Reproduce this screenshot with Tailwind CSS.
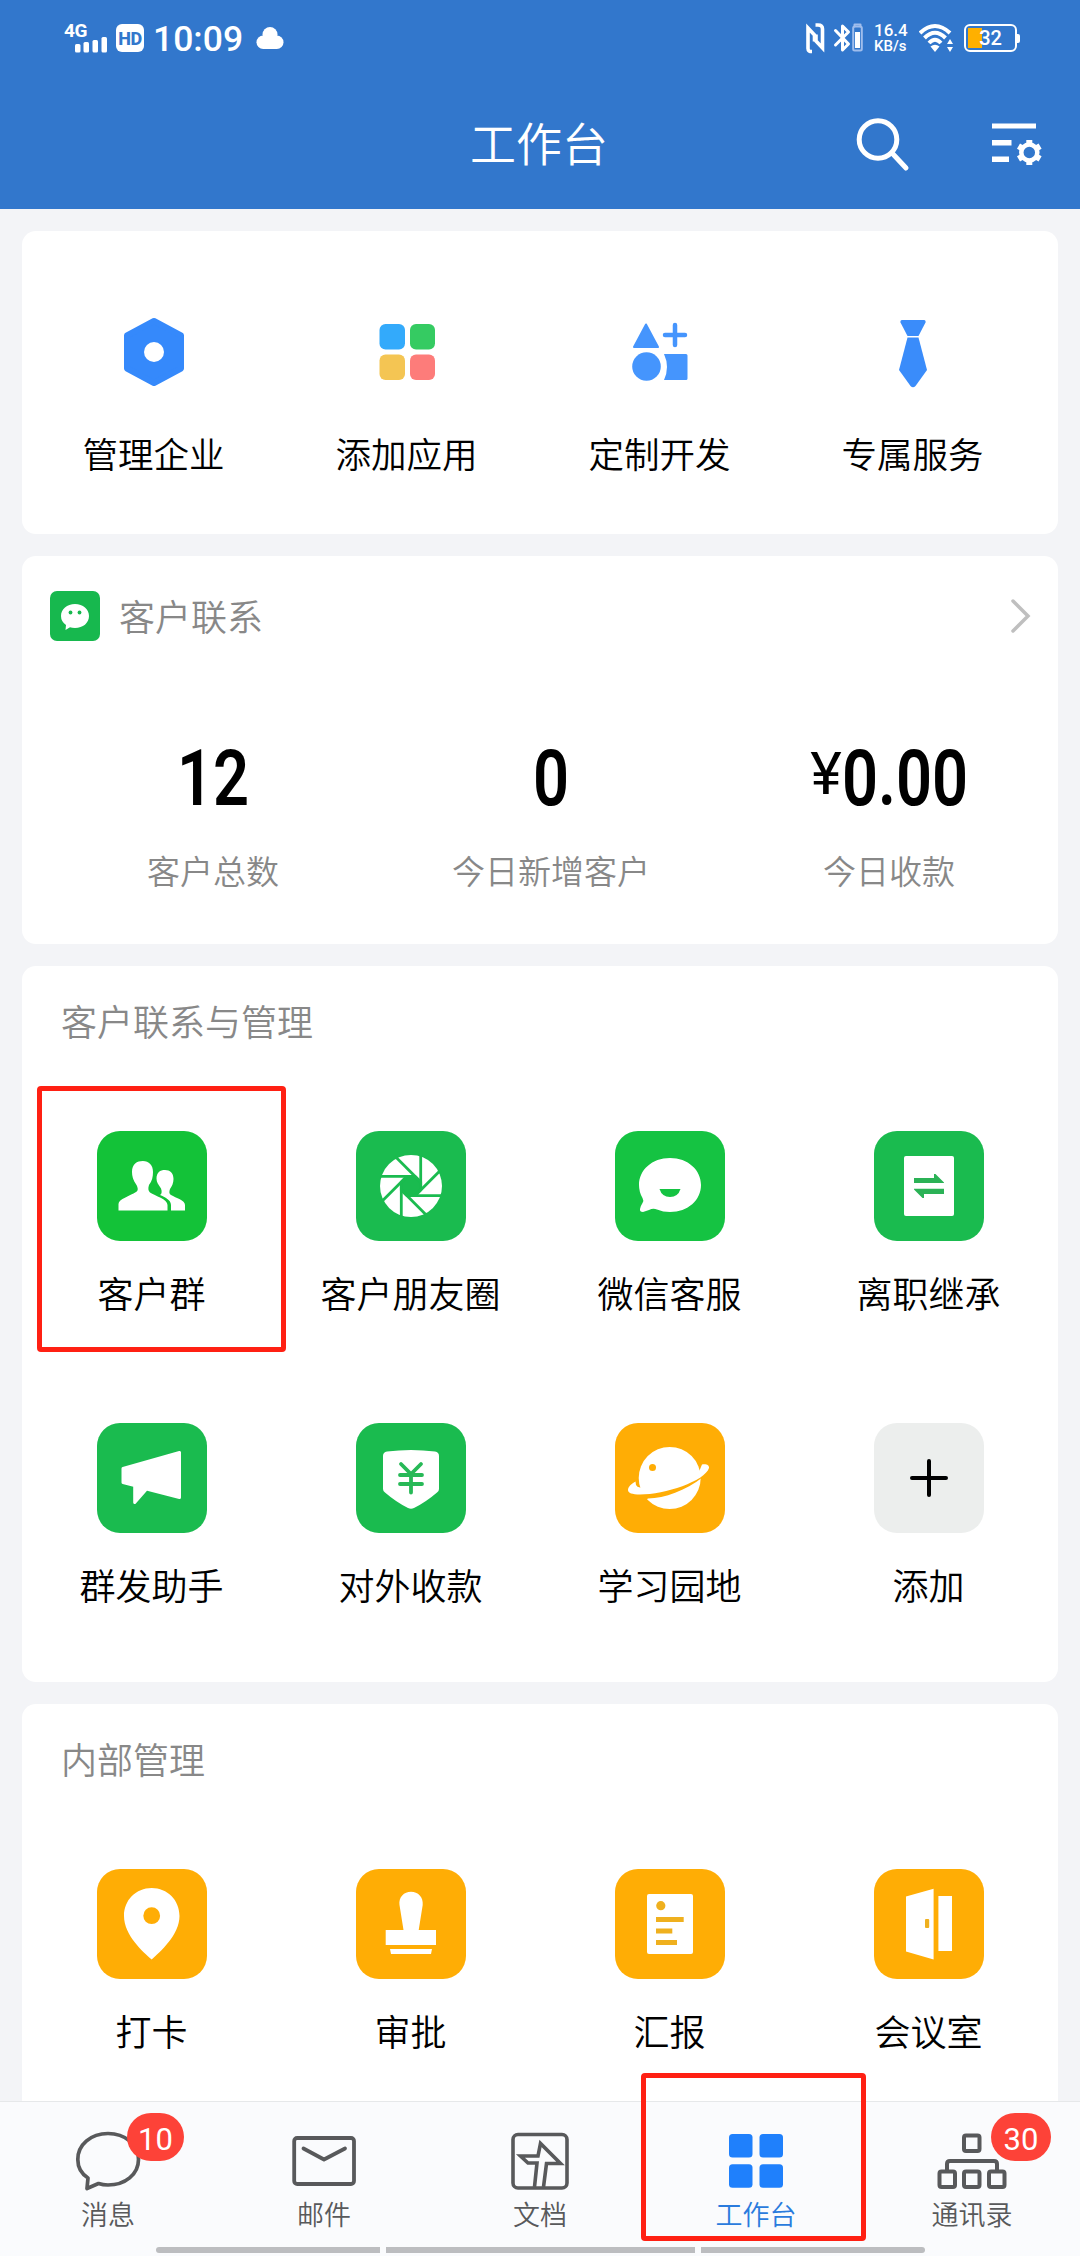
<!DOCTYPE html>
<html lang="zh-CN">
<head>
<meta charset="utf-8">
<title>工作台</title>
<script src="https://cdn.jsdelivr.net/npm/@tailwindcss/browser@4"></script>
</head>
<body class="w-[1080px] h-[2256px] overflow-hidden bg-[#f3f4f7] font-['Noto_Sans_CJK_SC',sans-serif] font-[350] text-black">
<div class="flex flex-col w-[1080px] h-[2256px]">

  <header class="h-[209px] shrink-0 bg-[#3277cc] text-white flex flex-col">
    <!-- status bar -->
    <div class="h-[76px] flex items-center justify-between pl-[62px] pr-[60px]">
      <div class="flex items-center h-[32px]">
        <div class="relative w-[46px] h-[32px]">
          <span class="absolute left-[2px] top-[0px] font-['Roboto',sans-serif] font-bold text-[19px] leading-[17px] tracking-[-0.5px]">4G</span>
          <svg class="absolute left-0 top-0" width="46" height="32" viewBox="0 0 46 32" fill="#fff"><rect x="13" y="22" width="5.5" height="8.5" rx="1.5"/><rect x="21.5" y="20" width="5.5" height="10.5" rx="1.5"/><rect x="30.5" y="18" width="5.5" height="12.5" rx="1.5"/><rect x="39.5" y="15" width="5.5" height="15.500" rx="1.500"/></svg>
        </div>
        <div class="ml-[8px] w-[28px] h-[28px] rounded-[6px] bg-white text-[#3277cc] font-['Roboto',sans-serif] font-extrabold text-[18px] tracking-[-0.5px] leading-[29px] text-center">HD</div>
        <span class="ml-[9px] w-[92px] font-['Roboto',sans-serif] font-medium text-[35.500px] leading-[32px] pt-[2px] whitespace-nowrap">10:09</span>
        <svg class="ml-[11px]" width="28" height="24" viewBox="0 0 28 24" fill="#fff"><circle cx="14" cy="8.500" r="7.500"/><rect x="0.500" y="9.500" width="27" height="13.500" rx="6.700"/></svg>
      </div>
      <div class="flex items-center h-[32px]">
        <svg width="62" height="32" viewBox="0 0 62 32" fill="none" stroke="#fff" stroke-linejoin="round" stroke-linecap="round">
          <path d="M10 29.500C7.500 29.500 6 29 6 26.500V6L12.500 13V19.500M13.500 3H16C19 3 20.500 4 20.500 7V26L14 19V12.500" stroke-width="3.600" stroke-linejoin="miter" stroke-linecap="butt"/>
          <path d="M33.500 8.500L46.500 22L40.500 28V4L46.500 10L33.500 23" stroke-width="3"/>
          <path d="M52.500 4.500V2.500H58.500V4.500" stroke="#9fbdec" stroke-width="2"/><rect x="51.200" y="4.500" width="8.600" height="24" rx="1.500" stroke="#9fbdec" stroke-width="2"/><rect x="53" y="10" width="5" height="16" fill="#fff" stroke="none"/>
        </svg>
        <div class="ml-[10px] w-[36px] font-['Roboto',sans-serif] font-medium leading-[16px]"><div class="text-[17px]">16.4</div><div class="text-[15px] whitespace-nowrap">KB/s</div></div>
        <svg class="ml-[9px]" width="36" height="30" viewBox="0 0 36 30" fill="none" stroke="#fff" stroke-width="4"><path d="M1 10Q16 -4 31 10M5.500 15Q16 4.500 26.500 15M10 20Q16 13.500 22 20"/><path d="M11.500 23.500Q16 20 20.500 23.500L16 29Z" fill="#fff" stroke="none"/><path d="M31 16L34 21H28ZM31 29L34 24H28Z" fill="#fff" stroke="none"/></svg>
        <div class="relative ml-[9px] w-[53px] h-[28px] rounded-[6px] border-[2.500px] border-white p-[2px] flex">
          <span class="w-[14px] h-full bg-[#ffb000]"></span>
          <span class="absolute inset-0 text-center font-['Roboto',sans-serif] font-medium text-[20px] leading-[25px]">32</span>
        </div>
        <span class="w-[3px] h-[9px] bg-white rounded-r-[2px]"></span>
      </div>
    </div>
    <!-- title bar -->
    <div class="grid grid-cols-3 items-center h-[133px]">
      <span></span>
      <h1 class="text-center text-[46px] leading-[60px] pb-[4px] pr-[2px]">工作台</h1>
      <div class="flex justify-end pr-[38px] pt-[3px] items-center">
        <svg width="56" height="56" viewBox="0 0 56 56" fill="none" stroke="#fff" stroke-width="5" stroke-linecap="round"><circle cx="23" cy="23.500" r="18.800"/><path d="M37 37L51 52"/></svg>
        <svg class="ml-[80px]" width="51" height="44" viewBox="0 0 51 44" fill="#fff"><path d="M1 1.500H45V6.500H1ZM1 18H20.500V23.500H1ZM1 34.500H18V40H1Z"/><circle cx="38.300" cy="30.500" r="8" fill="none" stroke="#fff" stroke-width="4.500"/><g stroke="#fff" stroke-width="6"><path d="M38.300 18V23M38.300 38V43M27.500 24.200L31.800 26.700M44.800 34.300L49.100 36.800M49.100 24.200L44.800 26.700M31.800 34.300L27.500 36.800"/></g></svg>
      </div>
    </div>
  </header>

  <main class="flex-1 min-h-0 overflow-hidden px-[22px] pt-[22px] flex flex-col gap-[22px]">
    <!-- shortcuts -->
    <section class="h-[303px] shrink-0 bg-white rounded-[14px] pl-[5px] pr-[19px] pt-[85px] grid grid-cols-4 text-[35.500px] leading-[44px]">
      <div class="flex flex-col items-center gap-[43px]">
        <svg width="72" height="72" viewBox="0 0 72 72"><path d="M36 5L63 19.500V52.500L36 67L9 52.500V19.500Z" fill="#3589fb" stroke="#3589fb" stroke-width="6" stroke-linejoin="round"/><circle cx="36" cy="36" r="10" fill="#fff"/></svg>
        <span>管理企业</span>
      </div>
      <div class="flex flex-col items-center gap-[43px]">
        <svg width="72" height="72" viewBox="0 0 72 72"><rect x="8.500" y="8" width="25.500" height="25.500" rx="6" fill="#33aafb"/><rect x="39" y="8" width="25" height="25.500" rx="6" fill="#35cb62"/><rect x="8.500" y="38.500" width="25.500" height="25.500" rx="6" fill="#f4c553"/><rect x="39" y="38.500" width="25" height="25.500" rx="6" fill="#fd7c7a"/></svg>
        <span>添加应用</span>
      </div>
      <div class="flex flex-col items-center gap-[43px]">
        <svg width="72" height="72" viewBox="0 0 72 72" fill="#4595fd"><path d="M22 8.500L34 31H10Z" stroke="#4595fd" stroke-width="2" stroke-linejoin="round"/><circle cx="22.500" cy="50.500" r="14.300"/><path d="M51 9V29M41 19H61" stroke="#4595fd" stroke-width="4.500" stroke-linecap="round"/><path d="M41 38H62Q63.500 38 63.500 39.500V62.500Q63.500 64 62 64H40Q46 51 40 38Z"/></svg>
        <span>定制开发</span>
      </div>
      <div class="flex flex-col items-center gap-[43px]">
        <svg width="72" height="72" viewBox="0 0 72 72" fill="#3a8cfa"><path d="M25 4H47Q49 4 48.500 6.500L41.500 20H30.500L23.500 6.500Q23 4 25 4Z"/><path d="M30.500 21.500H41.500L50 54L38.500 70Q36 72.500 33.500 70L22 54Z"/></svg>
        <span>专属服务</span>
      </div>
    </section>

    <!-- customer figures -->
    <section class="h-[388px] shrink-0 bg-white rounded-[14px]">
      <div class="flex items-center pt-[35px] pl-[28px] pr-[26px] h-[85px]">
        <svg width="50" height="50" viewBox="0 0 50 50"><rect width="50" height="50" rx="7" fill="#17b84e"/><path d="M25 13C33 13 39 18 39 25C39 32 33 37 25 37Q22 37 20 36.300L15.500 39L16 34Q11 30.500 11 25C11 18 17 13 25 13Z" fill="#fff"/><circle cx="20.500" cy="21.500" r="1.900" fill="#17b84e"/><circle cx="29.500" cy="21.500" r="1.900" fill="#17b84e"/></svg>
        <h2 class="ml-[19px] text-[36px] leading-[50px] text-[#888] pb-[2px]">客户联系</h2>
        <svg class="ml-auto" width="22" height="36" viewBox="0 0 22 36" fill="none" stroke="#bfbfbf" stroke-width="3.500" stroke-linecap="round"><path d="M3 3L18 18L3 33"/></svg>
      </div>
      <div class="grid grid-cols-3 pl-[22px] mt-[98px] text-center">
        <div><div class="font-['Roboto',sans-serif] font-semibold text-[77px] leading-[80px] scale-x-[.82]">12</div><div class="mt-[13px] text-[33px] leading-[76px] text-[#888]">客户总数</div></div>
        <div><div class="font-['Roboto',sans-serif] font-semibold text-[77px] leading-[80px] scale-x-[.82]">0</div><div class="mt-[13px] text-[33px] leading-[76px] text-[#888]">今日新增客户</div></div>
        <div><div class="flex justify-center font-['Roboto',sans-serif] font-semibold text-[77px] leading-[80px]"><span class="font-normal text-[60px] leading-[70px]">¥</span><span class="origin-left scale-x-[.82] mr-[-28px]">0.00</span></div><div class="mt-[13px] text-[33px] leading-[76px] text-[#888]">今日收款</div></div>
      </div>
    </section>

    <!-- customer tools -->
    <section class="relative h-[716px] shrink-0 bg-white rounded-[14px] pt-[29px]">
      <h2 class="pl-[39px] text-[36px] leading-[50px] text-[#888]">客户联系与管理</h2>
      <div class="mt-[86px] grid grid-cols-4 gap-y-[106px] text-[36px] leading-[50px] text-center">
        <div class="flex flex-col items-center gap-[26px]">
          <svg width="110" height="110" viewBox="0 0 110 110"><rect width="110" height="110" rx="23" fill="#13c238"/><path fill="#fff" d="M21.500 79.500V73C21.500 68 33 65 39 61C41.500 59.500 41 57 39.500 54C36 49 35 45 35 41C35 33 40 30 45.800 30C52 30 56 34 56 41C56 46 55 50 52 54C51 57 51 60 53 61.500C58 65 70.500 68 70.500 74V79.500Z"/><path fill="#fff" d="M74 79.500V74C74 69 68 66 63 64C65 63 65 60 64 57.500C61 53 59.500 51 59.500 47.500C59.500 41.500 63 39 68 39C73 39 76.500 42 76.500 48C76.500 52 75 55 73 58C72 61 72 63 74 64C79 67 88 69 88 74V79.500Z"/></svg>
          <span>客户群</span>
        </div>
        <div class="flex flex-col items-center gap-[26px]">
          <svg width="110" height="110" viewBox="0 0 110 110"><rect width="110" height="110" rx="23" fill="#1abb4f"/><circle cx="55" cy="55" r="31" fill="#fff"/><g transform="translate(55 55)" stroke="#1abb4f" stroke-width="2.800"><path fill="#1abb4f" d="M9.700 -4V4L4 9.700H-4L-9.700 4V-4L-4 -9.700H4Z"/><path d="M9.700 -32V4"/><path d="M9.700 -32V4" transform="rotate(45)"/><path d="M9.700 -32V4" transform="rotate(90)"/><path d="M9.700 -32V4" transform="rotate(135)"/><path d="M9.700 -32V4" transform="rotate(180)"/><path d="M9.700 -32V4" transform="rotate(225)"/><path d="M9.700 -32V4" transform="rotate(270)"/><path d="M9.700 -32V4" transform="rotate(315)"/></g></svg>
          <span>客户朋友圈</span>
        </div>
        <div class="flex flex-col items-center gap-[26px]">
          <svg width="110" height="110" viewBox="0 0 110 110"><rect width="110" height="110" rx="23" fill="#15c342"/><path fill="#fff" d="M55 27C73 27 86 39 86 54C86 69 73 81 55 81Q48 81 42 78.500Q38 77 34 79L28 81Q24.500 81 25 78Q25.500 75 27.500 72Q29 69.500 27.500 67Q24 61 24 54C24 39 37 27 55 27Z"/><path fill="#15c342" d="M44.500 58H65.500Q63 66 55 66T44.500 58Z"/></svg>
          <span>微信客服</span>
        </div>
        <div class="flex flex-col items-center gap-[26px]">
          <svg width="110" height="110" viewBox="0 0 110 110"><rect width="110" height="110" rx="23" fill="#1abb4f"/><rect x="30" y="25" width="50" height="60" rx="2" fill="#fff"/><path fill="#2bb256" d="M40 47H60V43H61.500L70 51.500V52H40ZM70 63H50V67H48.500L40 58.500V57.700H70Z"/></svg>
          <span>离职继承</span>
        </div>
        <div class="flex flex-col items-center gap-[26px]">
          <svg width="110" height="110" viewBox="0 0 110 110"><rect width="110" height="110" rx="23" fill="#1abb4f"/><path fill="#fff" stroke="#fff" stroke-width="3" stroke-linejoin="round" d="M26 45.500L82.500 29.500V74.500L49.500 66L37.700 79.500V62.500L26 59.500Z"/></svg>
          <span>群发助手</span>
        </div>
        <div class="flex flex-col items-center gap-[26px]">
          <svg width="110" height="110" viewBox="0 0 110 110"><rect width="110" height="110" rx="23" fill="#1abb4f"/><path fill="#fff" d="M31 28.500Q55 25.500 79 28.500Q83 29 83 33V66Q83 68 81 69.500Q70 79 58 85Q55 86.500 52 85Q40 79 29 69.500Q27 68 27 66V33Q27 29 31 28.500Z"/><path d="M45 41L55 51L65 41M44 52H66M44 61H66M55 51V69.500" fill="none" stroke="#27b957" stroke-width="3.800" stroke-linecap="round"/></svg>
          <span>对外收款</span>
        </div>
        <div class="flex flex-col items-center gap-[26px]">
          <svg width="110" height="110" viewBox="0 0 110 110"><rect width="110" height="110" rx="23" fill="#ffad05"/><circle cx="54.700" cy="55" r="31" fill="#fff"/><path fill="#ffad05" d="M20 70C45 71 66 64 88 51V54C70 68 50 75 33 75.500L26 80Z"/><path fill="#fff" d="M20.500 58.500C16 61 13 64 13 67C13 70 17 71.500 25 71.500C50 71.500 90 58 94 45C94.500 42 91 40.500 87 41.500L84.500 47.500L72 56L40 65L25 64.500Q22 64 21 62Z"/><circle cx="37.500" cy="44.500" r="3.500" fill="#ffad05"/></svg>
          <span>学习园地</span>
        </div>
        <div class="flex flex-col items-center gap-[26px]">
          <svg width="110" height="110" viewBox="0 0 110 110"><rect width="110" height="110" rx="23" fill="#eceeed"/><path d="M55 38V72M38 55H72" stroke="#000" stroke-width="4" stroke-linecap="round"/></svg>
          <span>添加</span>
        </div>
      </div>
      <div class="absolute left-[15px] top-[120px] w-[249px] h-[266px] border-[5px] border-[#ff2013] rounded-[4px]"></div>
    </section>

    <!-- internal management -->
    <section class="h-[500px] shrink-0 bg-white rounded-[14px] pt-[29px]">
      <h2 class="pl-[39px] text-[36px] leading-[50px] text-[#888]">内部管理</h2>
      <div class="mt-[86px] grid grid-cols-4 text-[36px] leading-[50px] text-center">
        <div class="flex flex-col items-center gap-[26px]">
          <svg width="110" height="110" viewBox="0 0 110 110"><rect width="110" height="110" rx="23" fill="#ffad05"/><path fill="#fff" d="M54.700 90.500C46 83 27 66 27 47C27 31 39 19 54.700 19S82.500 31 82.500 47C82.500 66 63 83 54.700 90.500Z"/><circle cx="54.700" cy="46.700" r="8.400" fill="#ffad05"/></svg>
          <span>打卡</span>
        </div>
        <div class="flex flex-col items-center gap-[26px]">
          <svg width="110" height="110" viewBox="0 0 110 110"><rect width="110" height="110" rx="23" fill="#ffad05"/><path fill="#fff" d="M47.500 61L43.500 36C42.500 28 48 22.700 55 22.700S67.500 28 66.700 36L62.700 61H80V76H29.700V61ZM34 80H76L75 85H35Z"/></svg>
          <span>审批</span>
        </div>
        <div class="flex flex-col items-center gap-[26px]">
          <svg width="110" height="110" viewBox="0 0 110 110"><rect width="110" height="110" rx="23" fill="#ffad05"/><rect x="32" y="25" width="46" height="60" rx="2" fill="#fff"/><circle cx="45.800" cy="36.700" r="4.600" fill="#efb01e"/><path fill="#efb01e" d="M41 48H68.700V53H41ZM41 59.500H57.300V64.500H41ZM41 71H62V76H41Z"/></svg>
          <span>汇报</span>
        </div>
        <div class="flex flex-col items-center gap-[26px]">
          <svg width="110" height="110" viewBox="0 0 110 110"><rect width="110" height="110" rx="23" fill="#ffad05"/><path fill="#fff" d="M32 27.500L59.600 19.700V90.500L32 82.500ZM64.400 27H78V82H64.400Z"/><rect x="51" y="50" width="4.200" height="9" rx="1" fill="#efb01e"/></svg>
          <span>会议室</span>
        </div>
      </div>
    </section>
  </main>

  <!-- tab bar -->
  <nav class="relative h-[155px] shrink-0 bg-[#fafbfd] border-t border-[#e6e8ea] pt-[26px] grid grid-cols-5 content-start text-[27px] leading-[40px] text-[#58595b]">
    <div class="relative flex flex-col items-center gap-[2px]">
      <svg width="72" height="64" viewBox="0 0 72 64" fill="none" stroke="#58595b" stroke-width="3.700" stroke-linejoin="round"><path d="M36 5.500C53 5.500 66.500 16.500 66.500 31.500S53 57 36 57Q31 57 26.500 55.500L15 60.500L16 50C9 45.500 5.800 39 5.800 31.500C5.800 16.500 19 5.500 36 5.500Z"/></svg>
      <span>消息</span>
      <span class="absolute left-[127px] top-[-15px] w-[57px] h-[48px] rounded-full bg-[#fd4238] text-white text-center font-['Roboto',sans-serif] font-normal text-[31px] leading-[53px]">10</span>
    </div>
    <div class="flex flex-col items-center gap-[2px]">
      <svg width="72" height="64" viewBox="0 0 72 64" fill="none" stroke="#58595b" stroke-width="3.800" stroke-linecap="round" stroke-linejoin="round"><rect x="6.200" y="10" width="59.800" height="46" rx="3"/><path d="M15.500 20.500L36 31.500L57 20.500"/></svg>
      <span>邮件</span>
    </div>
    <div class="flex flex-col items-center gap-[2px]">
      <svg width="72" height="64" viewBox="0 0 72 64" fill="none" stroke="#58595b" stroke-width="3.600"><rect x="9" y="6.500" width="54" height="53.500" rx="5"/><path d="M30.500 59L33 35H24L16.500 28H34L36.500 15.500L56.500 35.500H42.500L39.500 59"/></svg>
      <span>文档</span>
    </div>
    <div class="flex flex-col items-center gap-[2px] text-[#2a7bdd]">
      <svg width="72" height="64" viewBox="0 0 72 64" fill="#1f80fc"><rect x="9" y="6" width="23.500" height="23.500" rx="3.500"/><rect x="39.500" y="6" width="23.500" height="23.500" rx="3.500"/><rect x="9" y="36.300" width="23.500" height="23.500" rx="3.500"/><rect x="39.500" y="36.300" width="23.500" height="23.500" rx="3.500"/></svg>
      <span>工作台</span>
    </div>
    <div class="relative flex flex-col items-center gap-[2px]">
      <svg width="72" height="64" viewBox="0 0 72 64" fill="none" stroke="#58595b" stroke-width="4"><rect x="28" y="7.500" width="15.500" height="15.500" rx="2"/><rect x="3.500" y="43.500" width="15.500" height="15.500" rx="2"/><rect x="28" y="43.500" width="15.500" height="15.500" rx="2"/><rect x="53" y="43.500" width="15.500" height="15.500" rx="2"/><path d="M11 43V36Q11 33 14 33H58Q61 33 61 36V43"/></svg>
      <span>通讯录</span>
      <span class="absolute left-[127px] top-[-15px] w-[60px] h-[48px] rounded-full bg-[#fd4238] text-white text-center font-['Roboto',sans-serif] font-normal text-[31px] leading-[53px]">30</span>
    </div>
    <!-- gesture bar -->
    <div class="col-span-5 mt-[13px] flex justify-center gap-[6px]">
      <span class="w-[224px] h-[6px] bg-[#bcbdc0] rounded-l-full"></span>
      <span class="w-[309px] h-[6px] bg-[#bcbdc0]"></span>
      <span class="w-[224px] h-[6px] bg-[#bcbdc0] rounded-r-full"></span>
    </div>
    <div class="absolute left-[641px] top-[-29px] w-[225px] h-[168px] border-[5px] border-[#ff2013] rounded-[4px]"></div>
  </nav>
</div>
</body>
</html>
